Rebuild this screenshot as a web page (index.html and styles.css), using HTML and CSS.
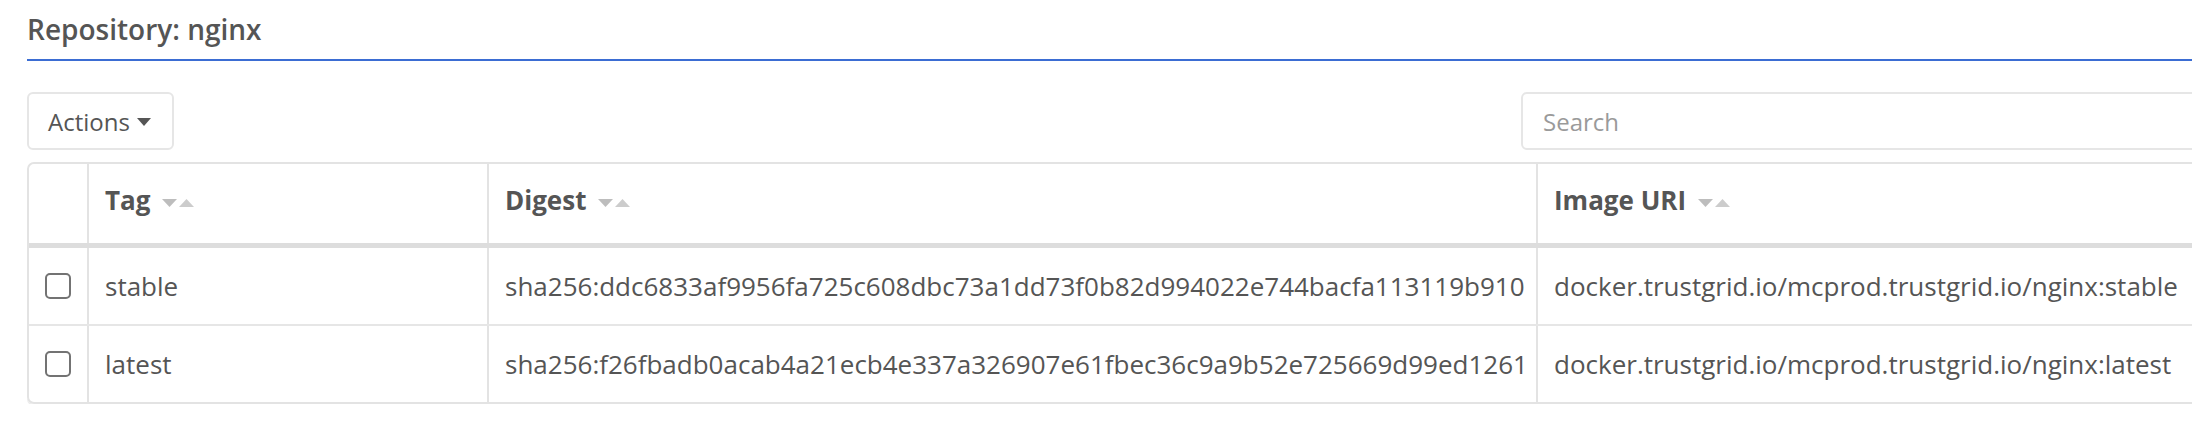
FILE: index.html
```html
<!DOCTYPE html>
<html lang="en">
<head>
<meta charset="utf-8">
<title>Repository: nginx</title>
<link rel="stylesheet" href="styles.css">
</head>
<body>
<div class="page">
  <div class="page-header">
    <h1 class="page-title">Repository: nginx</h1>
  </div>

  <div class="toolbar">
    <button class="btn-actions" type="button">Actions <span class="caret"></span></button>
    <input class="search" type="text" placeholder="Search">
  </div>

  <div class="grid-table">
    <div class="row row-head">
      <div class="cell cell-check"></div>
      <div class="cell">Tag <svg class="sort" viewBox="0 0 32 8" width="32" height="8"><path d="M0 0H15L7.5 8Z" fill="#bdbdbd"/><path d="M17 8H32L24.5 0Z" fill="#cccccc"/></svg></div>
      <div class="cell">Digest <svg class="sort" viewBox="0 0 32 8" width="32" height="8"><path d="M0 0H15L7.5 8Z" fill="#bdbdbd"/><path d="M17 8H32L24.5 0Z" fill="#cccccc"/></svg></div>
      <div class="cell">Image URI <svg class="sort" viewBox="0 0 32 8" width="32" height="8"><path d="M0 0H15L7.5 8Z" fill="#bdbdbd"/><path d="M17 8H32L24.5 0Z" fill="#cccccc"/></svg></div>
    </div>
    <div class="row row-body">
      <div class="cell cell-check"><input class="check" type="checkbox"></div>
      <div class="cell">stable</div>
      <div class="cell">sha256:ddc6833af9956fa725c608dbc73a1dd73f0b82d994022e744bacfa113119b910</div>
      <div class="cell">docker.trustgrid.io/mcprod.trustgrid.io/nginx:stable</div>
    </div>
    <div class="row row-body row-last">
      <div class="cell cell-check"><input class="check" type="checkbox"></div>
      <div class="cell">latest</div>
      <div class="cell">sha256:f26fbadb0acab4a21ecb4e337a326907e61fbec36c9a9b52e725669d99ed1261</div>
      <div class="cell">docker.trustgrid.io/mcprod.trustgrid.io/nginx:latest</div>
    </div>
  </div>
</div>
</body>
</html>
```

FILE: styles.css
```css
* { box-sizing: border-box; }

html, body {
  margin: 0;
  padding: 0;
  background: #ffffff;
  overflow: hidden;
}

body {
  font-family: "Open Sans", "Liberation Sans", sans-serif;
  font-size: 26px;
  color: #555555;
}

.page {
  margin-left: 27px;
  width: 2300px;
}

.page-header {
  padding-top: 10px;
  padding-bottom: 11px;
  border-bottom: 2px solid #3b6dd3;
}

.page-title {
  margin: 0;
  font-size: 28px;
  font-weight: 600;
  line-height: 38px;
  color: #555555;
}

.toolbar {
  margin-top: 31px;
  display: flex;
  align-items: flex-start;
}

.btn-actions {
  height: 58px;
  width: 147px;
  padding: 0 0 0 19px;
  display: flex;
  align-items: center;
  gap: 7px;
  background: #ffffff;
  border: 2px solid #e6e6e6;
  border-radius: 6px;
  font-family: inherit;
  font-size: 24px;
  color: #555555;
  cursor: pointer;
}

.caret {
  display: inline-block;
  width: 0;
  height: 0;
  border-top: 8px solid #555555;
  border-left: 7px solid transparent;
  border-right: 7px solid transparent;
  margin-top: 2px;
}

.search {
  margin-left: auto;
  width: 806px;
  height: 58px;
  padding: 0 20px;
  border: 2px solid #e6e6e6;
  border-radius: 6px;
  font-family: inherit;
  font-size: 24px;
  color: #555555;
  outline: none;
}

.search::placeholder {
  color: #9a9a9a;
}

.grid-table {
  margin-top: 12px;
  border: 2px solid #e3e3e3;
  border-radius: 7px;
  box-shadow: 0 2px 0 #ececec;
  overflow: hidden;
}

.row {
  display: grid;
  grid-template-columns: 58px 400px 1049px 1fr;
}

.cell {
  padding: 20px 16px;
  line-height: 36px;
  white-space: nowrap;
  border-left: 2px solid #e3e3e3;
}

.cell-check {
  border-left: none;
  padding: 0;
  display: flex;
  align-items: center;
  justify-content: center;
}

.row-head {
  border-bottom: 5px solid #dddddd;
}

.row-head .cell {
  padding-top: 18px;
  padding-bottom: 25px;
  font-weight: 700;
}

.row-body {
  border-bottom: 2px solid #e6e6e6;
}

.row-last {
  border-bottom: none;
}

.sort {
  display: inline-block;
  vertical-align: 3px;
  margin-left: 5px;
}

.check {
  appearance: none;
  -webkit-appearance: none;
  margin: 0;
  width: 26px;
  height: 26px;
  border: 2px solid #737373;
  border-radius: 5px;
  background: #ffffff;
}
```
